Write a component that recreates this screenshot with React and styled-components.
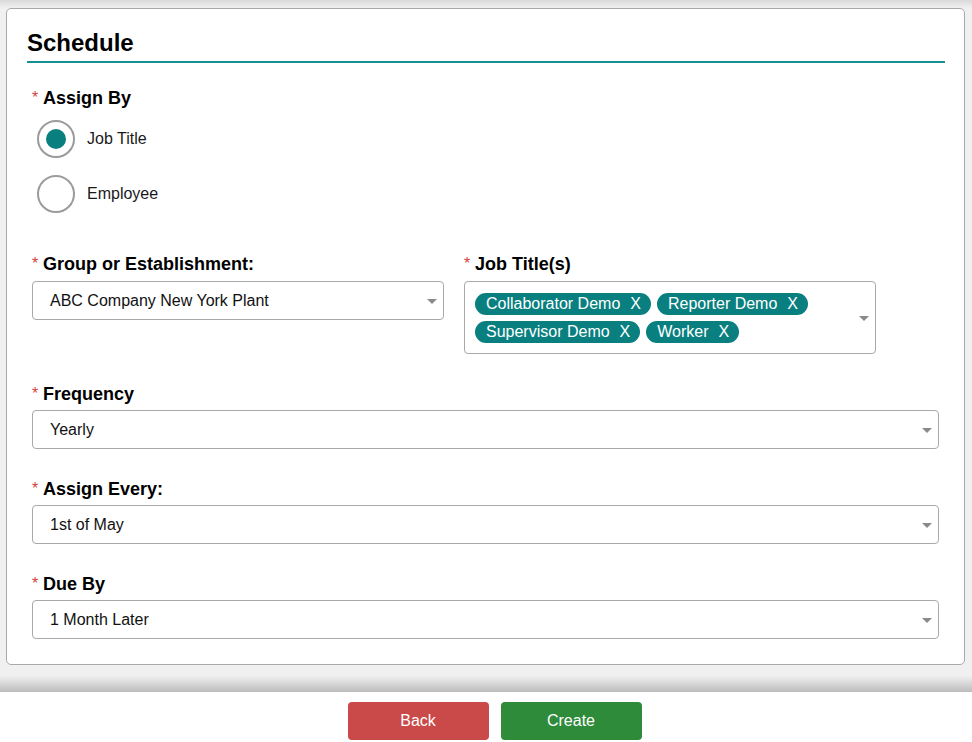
import React from "react";
import styled, { createGlobalStyle } from "styled-components";

const GlobalStyle = createGlobalStyle`
  html, body {
    margin: 0;
    padding: 0;
    background: #f0f0f0;
    font-family: "Liberation Sans", Arial, sans-serif;
    color: #111;
  }
  * { box-sizing: border-box; }
`;

const TEAL = "#097f7f";

const Page = styled.div`
  width: 972px;
  height: 742px;
  display: flex;
  flex-direction: column;
  overflow: hidden;
`;

const Main = styled.main`
  flex: 1;
  min-height: 0;
  padding: 8px 7px 12px 6px;
  background: linear-gradient(#d9d9d9 0px, #f0f0f0 8px, #f0f0f0 100%);
`;

const Card = styled.section`
  background: #fff;
  border: 1px solid #a9a9a9;
  border-radius: 5px;
  padding: 0 19px 25px 20px;
`;

const Header = styled.h2`
  margin: 0;
  padding: 20px 0 4px;
  font-size: 24px;
  line-height: 28px;
  font-weight: 700;
  color: #000;
  border-bottom: 2px solid #17908f;
`;

const Form = styled.div`
  padding: 24px 6px 0 5px;
  display: flex;
  flex-direction: column;
`;

const Field = styled.div`
  display: flex;
  flex-direction: column;
  margin-top: ${(p) => p.$top || 0}px;
`;

const Label = styled.label`
  font-size: 18px;
  line-height: 22px;
  font-weight: 700;
  color: #000;
  display: flex;
  align-items: baseline;
`;

const Req = styled.span`
  color: #d0433f;
  font-weight: 400;
  font-size: 16px;
  width: 11px;
  position: relative;
  top: -1px;
`;

const RadioGroup = styled.div`
  display: flex;
  flex-direction: column;
  gap: 17px;
  padding: 10px 0 0 5px;
`;

const RadioRow = styled.div`
  display: flex;
  align-items: center;
  gap: 12px;
  font-size: 16px;
  color: #1a1a1a;
`;

const RadioCircle = styled.span`
  width: 38px;
  height: 38px;
  border-radius: 50%;
  border: 2px solid #9b9b9b;
  display: flex;
  align-items: center;
  justify-content: center;
  background: #fff;
  &::after {
    content: "";
    width: 20px;
    height: 20px;
    border-radius: 50%;
    background: ${(p) => (p.$checked ? TEAL : "transparent")};
  }
`;

const Columns = styled.div`
  display: grid;
  grid-template-columns: 412px 412px;
  column-gap: 20px;
  align-items: start;
  margin-top: 40px;
`;

const SelectBox = styled.div`
  margin-top: ${(p) => p.$gap}px;
  position: relative;
  display: flex;
  align-items: center;
  min-height: ${(p) => (p.$tall ? 73 : 39)}px;
  border: 1px solid #a9a9a9;
  border-radius: 4px;
  background: #fff;
  padding: ${(p) => (p.$tall ? "10px 30px 10px 10px" : "0 30px 0 17px")};
  font-size: 16px;
  color: #111;
`;

const Caret = styled.span`
  position: absolute;
  right: 6px;
  top: 50%;
  margin-top: -2px;
  width: 0;
  height: 0;
  border-left: 5px solid transparent;
  border-right: 5px solid transparent;
  border-top: 5px solid #8a8a8a;
`;

const Chips = styled.div`
  display: flex;
  flex-wrap: wrap;
  gap: 6px;
  width: 340px;
`;

const Chip = styled.span`
  display: inline-flex;
  align-items: center;
  height: 22px;
  padding: 0 10px 0 11px;
  border-radius: 11px;
  background: ${TEAL};
  color: #fff;
  font-size: 16px;
  line-height: 22px;
`;

const ChipX = styled.span`
  margin-left: 10px;
`;

const Shade = styled.div`
  height: 16px;
  flex-shrink: 0;
  background: linear-gradient(#f0f0f0, #bcbcbc);
`;

const Footer = styled.footer`
  height: 50px;
  flex-shrink: 0;
  background: #fff;
  display: flex;
  justify-content: center;
  gap: 12px;
  padding: 10px 0 0 17px;
`;

const Button = styled.button`
  width: 141px;
  height: 38px;
  border: none;
  border-radius: 4px;
  background: ${(p) => (p.$tone === "danger" ? "#c94a48" : "#2e8b3a")};
  color: #fff;
  font-family: "Liberation Sans", Arial, sans-serif;
  font-size: 16px;
  cursor: pointer;
`;

function Select({ value, children, tall, gap = 4 }) {
  return (
    <SelectBox $tall={tall} $gap={gap}>
      {children || value}
      <Caret />
    </SelectBox>
  );
}

function Required({ children }) {
  return (
    <Label>
      <Req>*</Req>
      {children}
    </Label>
  );
}

const jobTitles = ["Collaborator Demo", "Reporter Demo", "Supervisor Demo", "Worker"];

export default function App() {
  return (
    <Page>
      <GlobalStyle />
      <Main>
        <Card>
          <Header>Schedule</Header>
          <Form>
            <Field>
              <Required>Assign By</Required>
              <RadioGroup>
                <RadioRow>
                  <RadioCircle $checked />
                  Job Title
                </RadioRow>
                <RadioRow>
                  <RadioCircle />
                  Employee
                </RadioRow>
              </RadioGroup>
            </Field>

            <Columns>
              <Field>
                <Required>Group or Establishment:</Required>
                <Select gap={5} value="ABC Company New York Plant" />
              </Field>
              <Field>
                <Required>Job Title(s)</Required>
                <Select gap={5} tall>
                  <Chips>
                    {jobTitles.map((t) => (
                      <Chip key={t}>
                        {t}
                        <ChipX>X</ChipX>
                      </Chip>
                    ))}
                  </Chips>
                </Select>
              </Field>
            </Columns>

            <Field $top={29}>
              <Required>Frequency</Required>
              <Select value="Yearly" />
            </Field>
            <Field $top={29}>
              <Required>Assign Every:</Required>
              <Select value="1st of May" />
            </Field>
            <Field $top={29}>
              <Required>Due By</Required>
              <Select value="1 Month Later" />
            </Field>
          </Form>
        </Card>
      </Main>
      <Shade />
      <Footer>
        <Button $tone="danger">Back</Button>
        <Button>Create</Button>
      </Footer>
    </Page>
  );
}
